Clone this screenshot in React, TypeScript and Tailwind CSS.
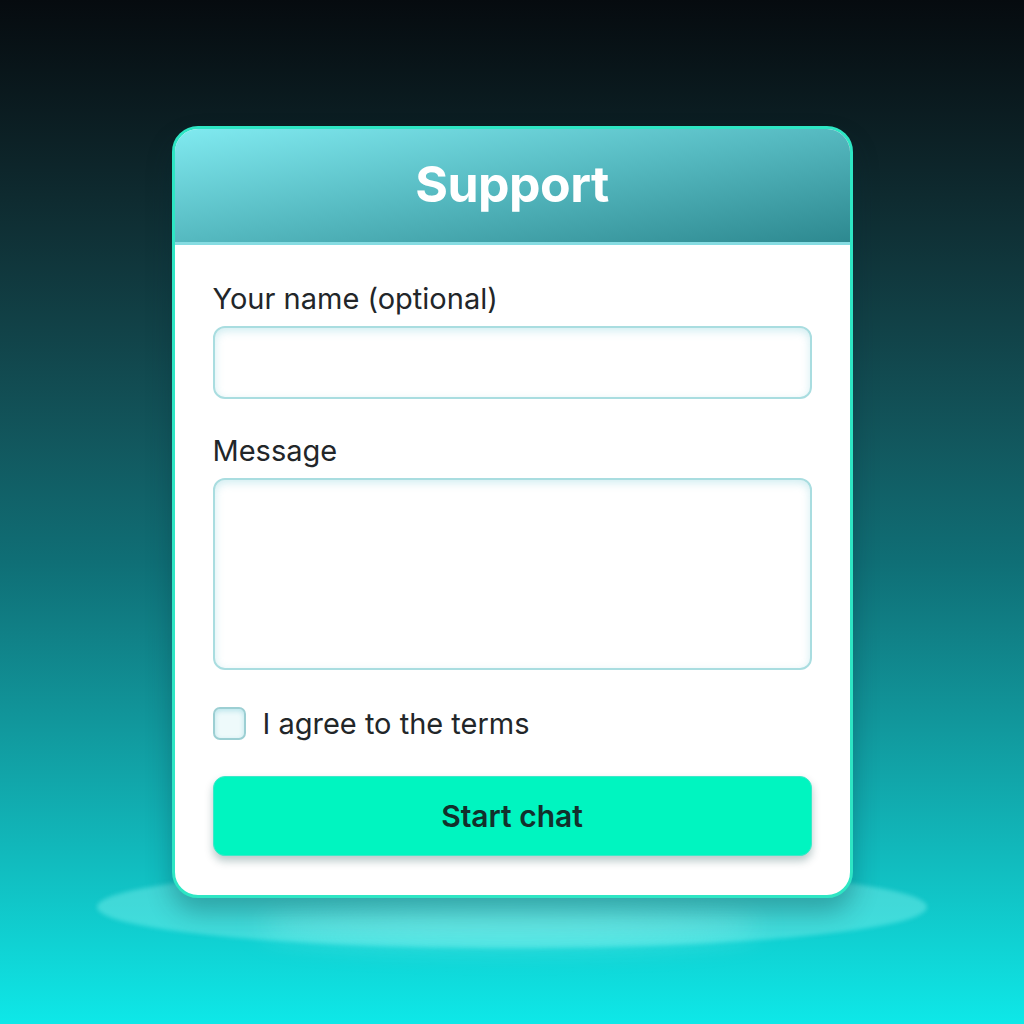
import React, { useState } from 'react';

const App: React.FC = () => {
  const [name, setName] = useState('');
  const [message, setMessage] = useState('');
  const [agreed, setAgreed] = useState(false);

  return (
    <div
      className="relative w-full h-[1024px] overflow-hidden flex items-center justify-center bg-gradient-to-b from-[#060b0f] via-[#0f6f76] via-55% to-[#0ee8e8]"
      style={{ fontFamily: 'Inter, "Noto Sans", sans-serif' }}
    >
      {/* glow under the card */}
      <div className="absolute left-[97px] top-[866px] w-[830px] h-[82px] rounded-[50%] bg-[#8af4f0]/40 blur-[2px]"></div>
      <div className="absolute left-[260px] top-[905px] w-[500px] h-[40px] rounded-[50%] bg-[#a8fbf6]/35 blur-[14px]"></div>

      <div className="relative z-10 w-[681px] rounded-[26px] border-[3px] border-[#2ee6c4] bg-white overflow-hidden shadow-[0_14px_26px_rgba(0,40,50,0.3)]">
        <div className="h-[116px] flex items-center justify-center bg-gradient-to-br from-[#80eaf0] via-[#55b9c0] to-[#2d8990] border-b-[3px] border-[#86dce2]">
          <h1 className="text-[50px] font-bold text-white tracking-[-0.01em] leading-none pb-[4px]">Support</h1>
        </div>

        <div className="px-[38px] pt-[37px] pb-[39px] flex flex-col">
          <label className="text-[29px] leading-[34px] text-[#222629] mb-[10px]">Your name (optional)</label>
          <input
            value={name}
            onChange={(e) => setName(e.target.value)}
            className="h-[73px] w-full rounded-[12px] border-2 border-[#a9dde0] bg-white shadow-[inset_0_3px_8px_rgba(150,215,225,0.45)] outline-none px-4 text-[22px]"
          />

          <label className="text-[29px] leading-[34px] text-[#222629] mt-[35px] mb-[10px]">Message</label>
          <textarea
            value={message}
            onChange={(e) => setMessage(e.target.value)}
            className="h-[192px] w-full resize-none rounded-[12px] border-2 border-[#a9dde0] bg-white shadow-[inset_0_3px_8px_rgba(150,215,225,0.45)] outline-none p-4 text-[22px]"
          />

          <label className="flex items-center gap-[17px] mt-[37px] cursor-pointer">
            <span
              onClick={() => setAgreed(!agreed)}
              className="w-[33px] h-[33px] rounded-[7px] border-2 border-[#9ccfd3] bg-[#eefafb] shadow-[inset_0_2px_5px_rgba(150,215,225,0.6)]"
            ></span>
            <span className="text-[29px] leading-[32px] text-[#222629]">I agree to the terms</span>
          </label>

          <button className="mt-[36px] h-[80px] w-full rounded-[12px] bg-[#00f5c0] border border-[#3ee8c8] shadow-[0_5px_8px_rgba(0,60,60,0.28)] text-[30px] font-semibold text-[#12302c]">
            Start chat
          </button>
        </div>
      </div>
    </div>
  );
};

export default App;
